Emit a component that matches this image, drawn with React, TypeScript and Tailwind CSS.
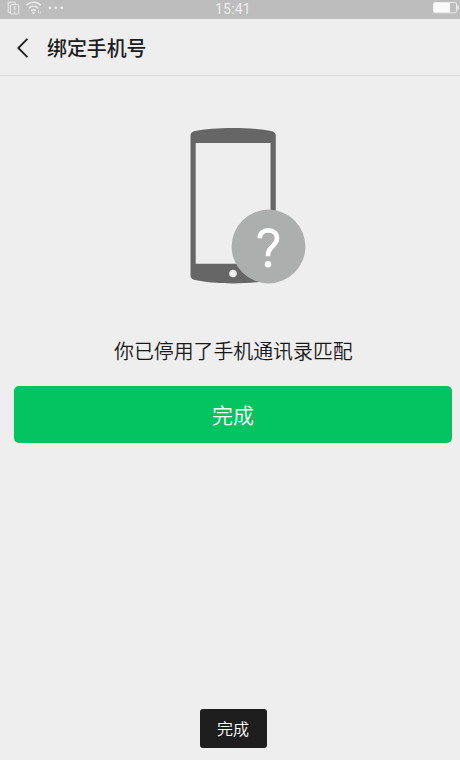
function StatusBar() {
    return (
        <div className="flex h-[19px] items-center bg-[#bdbdbd] text-[#ececec]">
            <svg className="ml-[7px]" width="60" height="19" viewBox="7 0 60 19" fill="none" stroke="currentColor">
                <path d="M10.5 12.5H8.2V2.2h7v1.6" />
                <rect x="10.5" y="4.5" width="8.3" height="9.5" rx="0.8" />
                <path d="M14.7 6.3v4M14.7 11.5v1.2" strokeWidth="1.3" />
                <path d="M26.3 5.3c4.2-4 10.4-4 14.4 0M28.7 8.2c2.9-2.7 6.8-2.7 9.5 0M31 10.8c1.7-1.4 3.4-1.4 5 0" strokeWidth="1.4" />
                <circle cx="33.4" cy="12.7" r="1.2" fill="currentColor" stroke="none" />
                <path d="M38.5 10v3.5M40.3 11v3" strokeWidth="0.8" opacity="0.7" />
                <g fill="currentColor" stroke="none">
                    <circle cx="50" cy="7.8" r="1.4" />
                    <circle cx="55.8" cy="7.8" r="1.4" />
                    <circle cx="61.6" cy="7.8" r="1.4" />
                </g>
            </svg>
            <span className="ml-[148px] w-[36px] font-['Roboto','Noto_Sans',sans-serif] text-[14px] leading-[17px] tracking-[0.2px]">15:41</span>
            <svg className="ml-auto" width="28" height="19" viewBox="0 0 28 19" fill="none" stroke="currentColor">
                <rect x="1.5" y="2.5" width="23" height="10.3" rx="1.5" />
                <rect x="2" y="3" width="16" height="9.3" fill="#fafafa" stroke="none" />
                <path d="M26 5.5v4" strokeWidth="1.6" />
            </svg>
        </div>
    );
}

function PhoneIcon() {
    return (
        <svg width="116" height="157" viewBox="190 127 116 157">
            <path
                d="M190.5 136c0-2.5 1-4 3.5-4.8 20-4.3 58-4.3 78.2 0 2.5.8 3.6 2.3 3.6 4.8v139c0 2.5-1.1 4-3.6 4.8-20.2 4.8-58.2 4.8-78.2 0-2.5-.8-3.5-2.3-3.5-4.8z"
                fill="#666"
            />
            <path d="M195.7 143h74.8v120.7h-74.8z" fill="#eee" />
            <circle cx="233" cy="273.5" r="3.8" fill="#eee" />
            <circle cx="268.5" cy="246.5" r="36.9" fill="#adafae" />
            <path
                d="M259.8 238.3c0-4.8 3.4-7.9 8.4-7.9 5.2 0 8.8 3 8.8 7.900 0 2.900-1.300 4.900-4 7.600-3.300 3.300-5 5-5 8.600v1.800"
                fill="none"
                stroke="#fff"
                strokeWidth="4.6"
            />
            <circle cx="268" cy="264.3" r="3.2" fill="#fff" />
        </svg>
    );
}

export default function App() {
    return (
        <div className="flex h-[760px] w-[460px] flex-col bg-[#eee] font-['Noto_Sans_CJK_SC',sans-serif]">
            <StatusBar />
            <header className="flex h-[57px] items-center border-b border-[#dcdcdc] text-[#1c1c1c]">
                <svg className="mt-px ml-4" width="14" height="22" viewBox="0 0 14 22" fill="none" stroke="currentColor" strokeWidth="1.8">
                    <path d="M11.4 1.8L2.3 11l9.1 9.2" />
                </svg>
                <h1 className="mt-0.5 ml-[17px] text-[19.9px] leading-[30px] font-medium">绑定手机号</h1>
            </header>
            <main className="flex flex-1 flex-col">
                <div className="mt-[51px] ml-[190px]">
                    <PhoneIcon />
                </div>
                <p className="mt-[52px] ml-[114px] text-[19.9px] leading-[30px] font-[350] text-[#181818]">你已停用了手机通讯录匹配</p>
                <button className="mt-5 ml-[14px] h-[56.5px] w-[438px] rounded-[5px] bg-[#04c461] text-[21px] font-[350] text-white">完成</button>
            </main>
            <div className="mb-3 ml-[199.5px] flex h-[39px] w-[67px] items-center justify-center rounded-[3px] bg-[#1e1e1e] pb-0.5 text-[16px] font-[350] text-white">
                完成
            </div>
        </div>
    );
}
